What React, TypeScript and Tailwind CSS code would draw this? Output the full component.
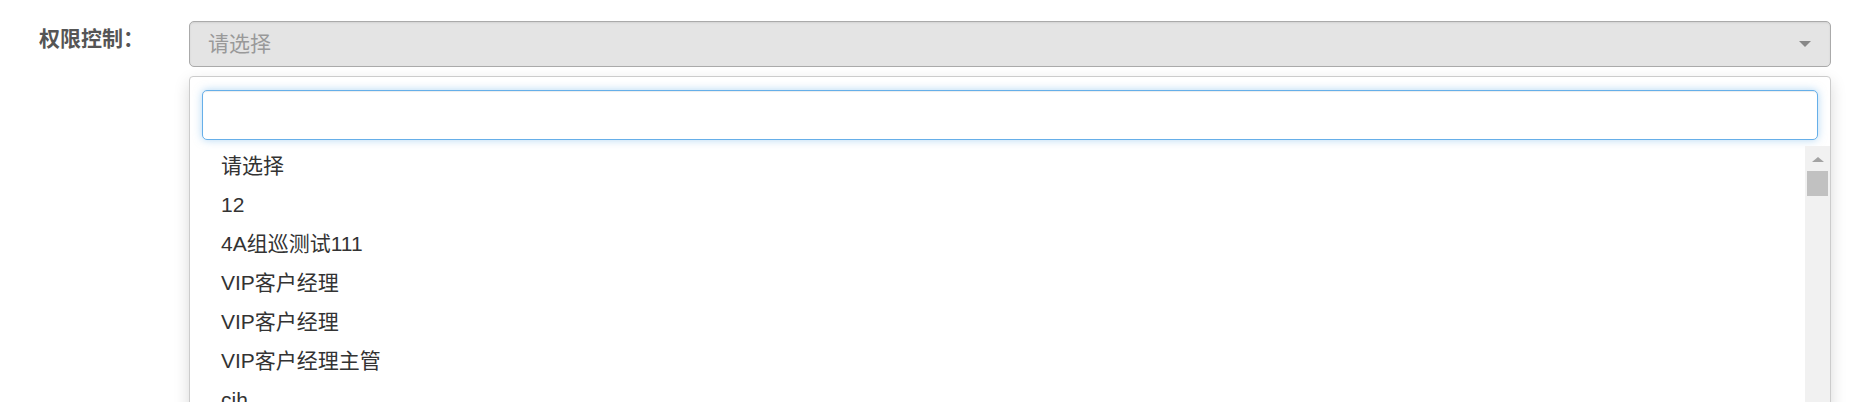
import React from 'react';

const options = ['请选择', '12', '4A组巡测试111', 'VIP客户经理', 'VIP客户经理', 'VIP客户经理主管', 'cjh', 'test'];

export default function App() {
  return (
    <div
      className="h-[402px] w-full overflow-hidden bg-white"
      style={{ fontFamily: '"Liberation Sans", "Noto Sans CJK SC", sans-serif' }}
    >
      <div className="flex pt-[21px] pr-[40px]">
        {/* 标签 */}
        <div className="w-[189px] shrink-0 pl-[39px] pt-[4px] text-[21px] font-bold leading-[28px] text-[#555]">
          权限控制：
        </div>

        <div className="relative flex-1">
          {/* 选择框 */}
          <div className="flex h-[46px] items-center justify-between rounded-[5px] border border-[#aaa] bg-[#e4e4e4] pl-[18px] pr-[19px] shadow-[inset_0_1px_2px_rgba(0,0,0,0.08)]">
            <span className="text-[21px] text-[#999]">请选择</span>
            <span className="h-0 w-0 border-x-[6px] border-t-[6px] border-x-transparent border-t-[#888]" />
          </div>

          {/* 下拉面板 */}
          <div className="mt-[9px] rounded-t-[4px] border border-[#ccc] bg-white shadow-[0_6px_16px_rgba(0,0,0,0.15)]">
            <div className="px-[12px] pt-[13px] pb-[6px]">
              <div className="h-[50px] rounded-[5px] border border-[#66afe9] bg-white shadow-[inset_0_1px_1px_rgba(0,0,0,0.075),0_0_8px_rgba(102,175,233,0.5)]" />
            </div>
            <div className="flex h-[300px]">
              <ul className="flex-1">
                {options.map((item, i) => (
                  <li key={i} className="flex h-[39px] items-center pl-[31px] text-[21px] text-[#333]">
                    {item}
                  </li>
                ))}
              </ul>
              {/* 滚动条 */}
              <div className="flex w-[25px] flex-col items-center bg-[#f1f1f1]">
                <span className="mt-[11px] h-0 w-0 border-x-[6px] border-b-[5px] border-x-transparent border-b-[#a3a3a3]" />
                <span className="mt-[9px] h-[25px] w-[21px] bg-[#c1c1c1]" />
              </div>
            </div>
          </div>
        </div>
      </div>
    </div>
  );
}
